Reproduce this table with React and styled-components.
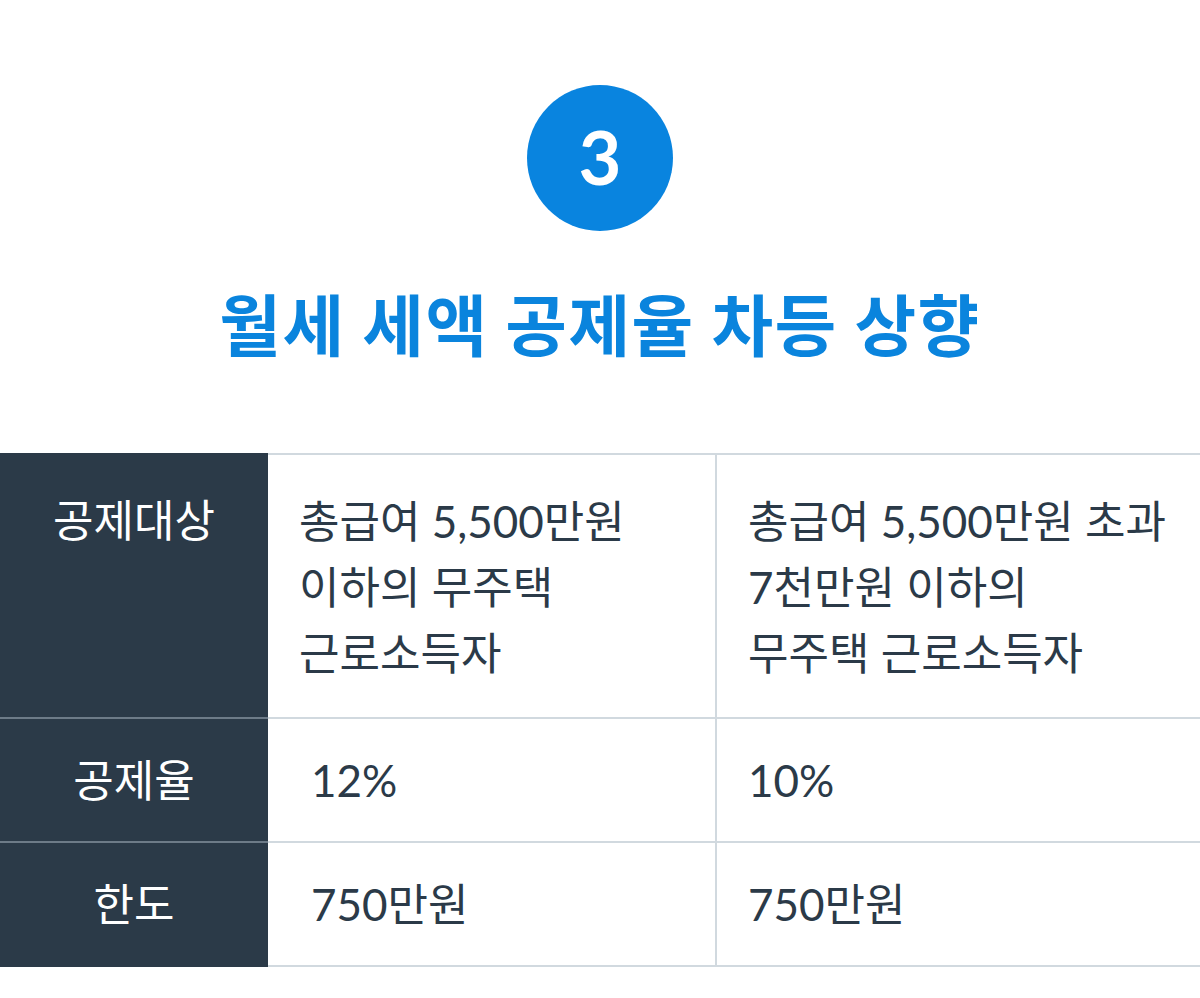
import styled, { createGlobalStyle } from 'styled-components';

const GlobalStyle = createGlobalStyle`
  body {
    margin: 0;
    background: #ffffff;
    font-family: Lato, "Noto Sans CJK KR", sans-serif;
  }
  * {
    box-sizing: border-box;
  }
`;

const Page = styled.div`
  width: 1200px;
  height: 998px;
  background: #ffffff;
`;

const Hero = styled.header`
  height: 453px;
  padding-top: 85px;
  display: flex;
  flex-direction: column;
  align-items: center;
`;

const Badge = styled.div`
  width: 146px;
  height: 146px;
  border-radius: 50%;
  background: #0984df;
  color: #ffffff;
  display: flex;
  align-items: center;
  justify-content: center;
  font-family: Lato, sans-serif;
  font-weight: 700;
  font-size: 74px;
  line-height: 1;
  padding-bottom: 2px;
`;

const Title = styled.h1`
  margin: 51px 0 0;
  font-family: "Noto Sans CJK KR", sans-serif;
  font-weight: 700;
  font-size: 67px;
  line-height: 80px;
  color: #0a84dd;
  letter-spacing: 1.5px;
`;

const Table = styled.div`
  display: flex;
  flex-direction: column;
`;

const Row = styled.div`
  display: grid;
  grid-template-columns: 268px 447px 1fr;
`;

const HeadCell = styled.div`
  background: #2b3a48;
  color: #ffffff;
  text-align: center;
  font-size: 44px;
  line-height: 66px;
  font-weight: 400;
  padding: ${p => (p.$tall ? '34px 0 30px' : '28px 0')};
  border-bottom: ${p => (p.$last ? 'none' : '2px solid #6d7b88')};
`;

const Cell = styled.div`
  color: #2b3a48;
  font-size: 44px;
  line-height: 66px;
  font-weight: 400;
  padding: ${p => (p.$tall ? '33px 20px 31px' : '28px 20px')};
  padding-left: ${p => 31 + (p.$indent || 0)}px;
  border-top: ${p => (p.$first ? '2px solid #d1d9df' : 'none')};
  border-bottom: 2px solid #d1d9df;
  border-left: ${p => (p.$divider ? '2px solid #d1d9df' : 'none')};
`;

const rows = [
  {
    head: '공제대상',
    a: ['총급여 5,500만원', '이하의 무주택', '근로소득자'],
    b: ['총급여 5,500만원 초과', '7천만원 이하의', '무주택 근로소득자'],
    tall: true,
  },
  { head: '공제율', a: ['12%'], b: ['10%'], indent: 12 },
  { head: '한도', a: ['750만원'], b: ['750만원'], indent: 12 },
];

const Lines = ({ lines }) =>
  lines.map((line, i) => <div key={i}>{line}</div>);

const App = () => (
  <Page>
    <GlobalStyle />
    <Hero>
      <Badge>3</Badge>
      <Title>월세 세액 공제율 차등 상향</Title>
    </Hero>
    <Table>
      {rows.map((r, i) => (
        <Row key={r.head}>
          <HeadCell $tall={r.tall} $last={i === rows.length - 1}>{r.head}</HeadCell>
          <Cell $tall={r.tall} $first={i === 0} $indent={r.indent}>
            <Lines lines={r.a} />
          </Cell>
          <Cell $tall={r.tall} $first={i === 0} $divider>
            <Lines lines={r.b} />
          </Cell>
        </Row>
      ))}
    </Table>
  </Page>
);

export default App;
